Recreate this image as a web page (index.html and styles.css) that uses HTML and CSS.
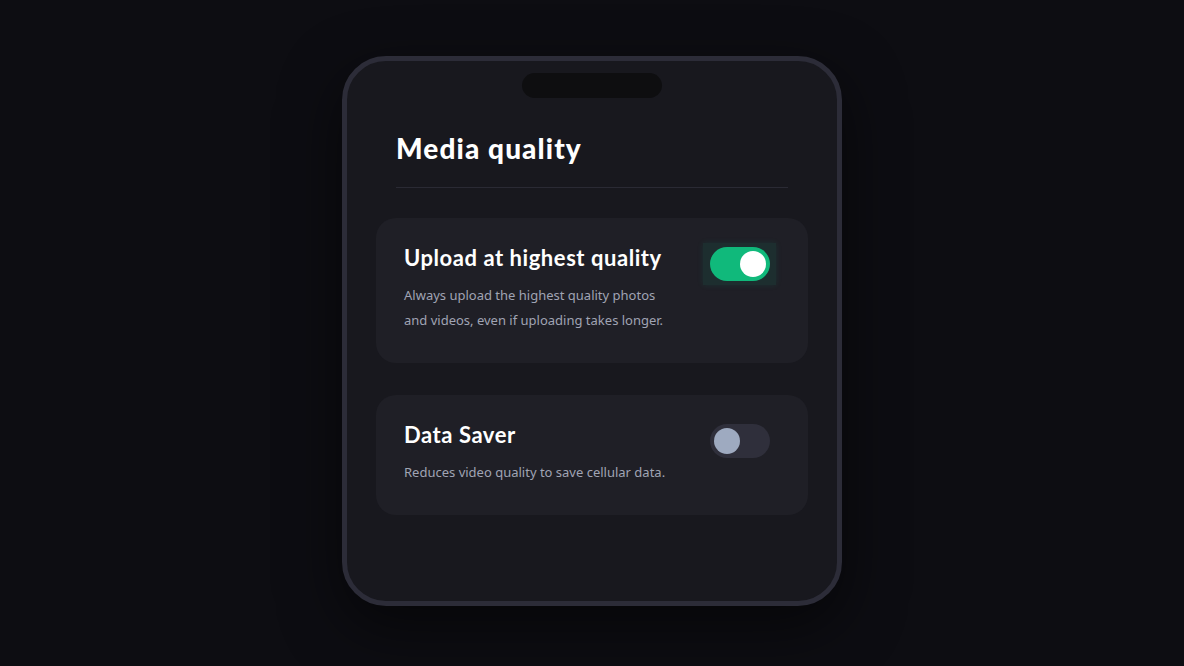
FILE: index.html
```html
<!DOCTYPE html>
<html lang="en">
<head>
<meta charset="utf-8">
<title>Media quality</title>
<link rel="stylesheet" href="styles.css">
</head>
<body>
<main class="stage">
  <section class="phone">
    <div class="notch"></div>
    <header class="header">
      <h1 class="title">Media quality</h1>
    </header>
    <div class="list">
      <article class="card">
        <div class="card-text">
          <h2 class="card-title">Upload at highest quality</h2>
          <p class="card-desc">Always upload the highest quality photos and videos, even if uploading takes longer.</p>
        </div>
        <div class="toggle-wrap on">
          <div class="toggle on"><span class="knob"></span></div>
        </div>
      </article>
      <article class="card">
        <div class="card-text">
          <h2 class="card-title">Data Saver</h2>
          <p class="card-desc">Reduces video quality to save cellular data.</p>
        </div>
        <div class="toggle-wrap">
          <div class="toggle"><span class="knob"></span></div>
        </div>
      </article>
    </div>
  </section>
</main>
</body>
</html>
```

FILE: styles.css
```css
* { box-sizing: border-box; }
html, body { margin: 0; padding: 0; }
body {
  background: #0d0d12;
  width: 1184px;
  height: 666px;
  overflow: hidden;
  font-family: "Noto Sans", "Open Sans", sans-serif;
}
.stage {
  width: 100%;
  height: 100%;
  display: flex;
  justify-content: center;
  padding-top: 56px;
}
.phone {
  width: 500px;
  height: 550px;
  border: 5px solid #2c2c38;
  border-radius: 44px;
  background: #18181e;
  box-shadow: 0 20px 60px rgba(0, 0, 0, 0.55);
  padding: 12px 29px 0;
  display: flex;
  flex-direction: column;
}
.notch {
  align-self: center;
  width: 140px;
  height: 25px;
  border-radius: 13px;
  background: #0e0e10;
}
.header {
  margin: 0 20px;
  padding: 33px 0 22px;
  border-bottom: 1px solid #2a2a34;
}
.title {
  margin: 0;
  font-family: "Lato", sans-serif;
  font-weight: 900;
  font-size: 28px;
  line-height: 34px;
  color: #ffffff;
  letter-spacing: 1.1px;
}
.list {
  display: flex;
  flex-direction: column;
  gap: 32px;
  margin-top: 30px;
}
.card {
  background: #1f1f26;
  border-radius: 20px;
  padding: 26px 38px 30px 28px;
  display: flex;
  align-items: flex-start;
  gap: 40px;
}
.card-text { flex: 1; }
.card-title {
  margin: 0 0 11px;
  font-family: "Lato", sans-serif;
  font-weight: 700;
  font-size: 22px;
  line-height: 28px;
  letter-spacing: 0.55px;
  color: #ffffff;
}
.card-desc {
  margin: 0;
  font-size: 13px;
  line-height: 25px;
  color: #a0a4b4;
}
.toggle-wrap {
  margin-top: -1px;
  margin-right: -6px;
  margin-left: -7px;
  padding: 4px 6px 4px 7px;
}
.toggle-wrap.on {
  background: rgba(16, 185, 129, 0.10);
  box-shadow: 0 0 6px rgba(16, 185, 129, 0.12);
}
.toggle {
  width: 60px;
  height: 34px;
  border-radius: 17px;
  background: #2f2f3b;
  padding: 4px;
  display: flex;
  justify-content: flex-start;
}
.toggle.on {
  background: #10b97b;
  justify-content: flex-end;
}
.knob {
  width: 26px;
  height: 26px;
  border-radius: 50%;
  background: #9eaac0;
}
.toggle.on .knob { background: #ffffff; }
```
